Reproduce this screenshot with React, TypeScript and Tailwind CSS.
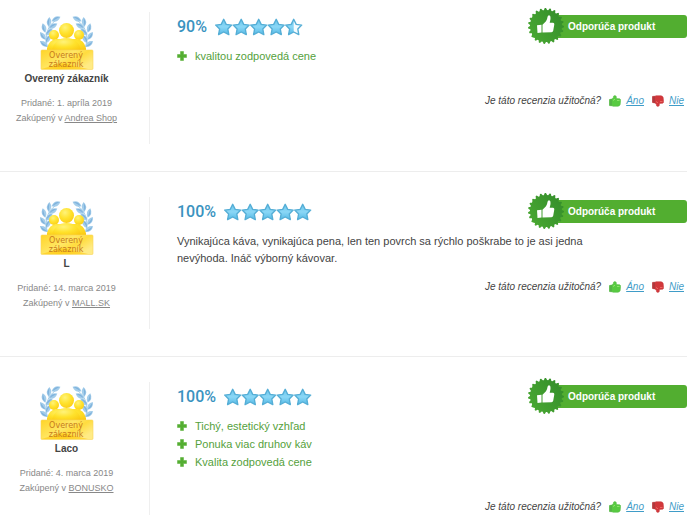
import React from "react";

type Review = {
  author: string;
  date: string;
  shop: string;
  percent: number;
  pros?: string[];
  text?: string;
};

const reviews: Review[] = [
  { author: "Overený zákazník", date: "1. apríla 2019", shop: "Andrea Shop", percent: 90, pros: ["kvalitou zodpovedá cene"] },
  {
    author: "L",
    date: "14. marca 2019",
    shop: "MALL.SK",
    percent: 100,
    text: "Vynikajúca káva, vynikajúca pena, len ten povrch sa rýchlo poškrabe to je asi jedna nevýhoda. Ináč výborný kávovar.",
  },
  {
    author: "Laco",
    date: "4. marca 2019",
    shop: "BONUSKO",
    percent: 100,
    pros: ["Tichý, estetický vzhľad", "Ponuka viac druhov káv", "Kvalita zodpovedá cene"],
  },
];

const leaves = [
  [16, 3, 62], [9, 6, 5], [13, 10, 60], [4, 12, -15],
  [9, 16, 45], [3, 20, -35], [8, 23, 30], [4, 28, -55],
];

function Laurel() {
  return (
    <g fill="#a3cdea">
      <path d="M15 5C8 10 5 17 7 31" fill="none" stroke="#a9d0e8" strokeWidth="1" />
      {leaves.map(([x, y, r], i) => (
        <g key={i} transform={`translate(${x} ${y}) rotate(${r})`}>
          <path d="M0 -5Q4.500 0 0 5Q-4.500 0 0 -5Z" />
          <path d="M0 -4Q-3 0 0 4Z" fill="#7fb2dc" />
        </g>
      ))}
    </g>
  );
}

function VerifiedBadge({ id }: { id: string }) {
  return (
    <svg width="54" height="54" viewBox="0 0 54 54" role="img" aria-label="Overený zákazník" className="block">
      <defs>
        <radialGradient id={`${id}-p`} cx="0.4" cy="0.3" r="0.8">
          <stop offset="0" stopColor="#fff37a" />
          <stop offset="0.5" stopColor="#ffe22c" />
          <stop offset="1" stopColor="#fbc812" />
        </radialGradient>
        <linearGradient id={`${id}-b`} x1="0" y1="0" x2="1" y2="0.6">
          <stop offset="0" stopColor="#ffd427" />
          <stop offset="0.5" stopColor="#ffe765" />
          <stop offset="0.7" stopColor="#ffdc3e" />
          <stop offset="1" stopColor="#ffeb85" />
        </linearGradient>
      </defs>
      <Laurel />
      <g transform="translate(53 0) scale(-1 1)"><Laurel /></g>
      <g fill={`url(#${id}-p)`}>
        <circle cx="14" cy="19" r="5" />
        <circle cx="39" cy="19" r="5" />
        <path d="M7 35V32Q9 24 16 23H37Q44 24 46 32V35Z" />
        <path d="M12 35C13 26 19 22 26.500 22S40 26 41 35Z" />
        <circle cx="26.500" cy="14.500" r="7.500" />
      </g>
      <rect x="1" y="34" width="52" height="19.500" rx="1" fill={`url(#${id}-b)`} stroke="#f9d55a" strokeWidth="0.600" />
      <path d="M1.500 53L22 47L48 53Z" fill="#ffc80c" opacity="0.6" />
      <g fill="#c77a1c" fontFamily="DejaVu Sans, sans-serif" fontSize="8" textAnchor="middle">
        <text x="26" y="42">Overený</text>
        <text x="26" y="51">zákazník</text>
      </g>
    </svg>
  );
}

const starPath = "M8.700 0.800L11.200 5.900L16.700 6.600L12.800 10.500L13.800 16.100L8.700 13.500L3.600 16.100L4.600 10.500L0.700 6.600L6.200 5.900Z";

function Stars({ percent, id }: { percent: number; id: string }) {
  const filled = percent / 20;
  return (
    <svg width="88" height="18" viewBox="0 0 88 18" role="img" aria-label={`${percent}%`} className="block">
      <defs>
        <linearGradient id={`${id}-s`} x1="0" y1="0" x2="0" y2="1">
          <stop offset="0" stopColor="#6cc6ec" />
          <stop offset="0.5" stopColor="#8ad7f6" />
          <stop offset="1" stopColor="#54b9e5" />
        </linearGradient>
        <clipPath id={`${id}-c`}><rect x="0" y="0" width="8.700" height="18" /></clipPath>
      </defs>
      {[0, 1, 2, 3, 4].map((i) => (
        <g key={i} transform={`translate(${i * 17.5} 0.5)`}>
          <path d={starPath} fill="#f4fbfe" />
          <path d={starPath} fill={`url(#${id}-s)`} clipPath={filled - i < 1 ? `url(#${id}-c)` : undefined} />
          <path d={starPath} fill="none" stroke="#55aed6" strokeWidth="1.400" strokeLinejoin="round" />
        </g>
      ))}
    </svg>
  );
}

const sealPoints = Array.from({ length: 92 }, (_, i) => {
  const angle = (i * Math.PI * 2) / 92;
  const radius = i % 4 < 2 ? 18 : 16;
  return `${(18 + Math.cos(angle) * radius).toFixed(2)},${(18 + Math.sin(angle) * radius).toFixed(2)}`;
}).join(" ");

function Seal({ id }: { id: string }) {
  return (
    <svg width="36" height="36" viewBox="0 0 36 36" aria-hidden="true" className="absolute -top-[7px] -left-1">
      <defs>
        <linearGradient id={`${id}-g`} x1="0" y1="1" x2="1" y2="0.3">
          <stop offset="0" stopColor="#4cab33" />
          <stop offset="1" stopColor="#358f2b" />
        </linearGradient>
      </defs>
      <polygon points={sealPoints} fill={`url(#${id}-g)`} strokeLinejoin="round" />
      <path
        fill="#fff"
        d="M9 17.200L13.500 16.700V24.500L9.500 25ZM14.500 16.700L18 13.300Q19.200 11.500 19.500 9Q19.800 7 21.300 7.200Q23 7.800 22.500 11L21.700 14.800H25Q26.500 15 26.300 16.600L25.200 22.800Q24.900 24.200 23.500 24.300L14.500 24.600Z"
      />
    </svg>
  );
}

function Thumb({ down = false }: { down?: boolean }) {
  return (
    <svg width="12" height="12" viewBox="0 0 12 12" aria-hidden="true" className="block shrink-0">
      <g transform={down ? "translate(0 12) scale(1 -1)" : undefined}>
        <path
          d="M0.500 4.500L3 4L4.500 2.200V1.200Q5.800 0 7.200 1.200L7.500 3.500L10.800 3.800Q11.800 4.300 11.600 5.500L11.200 9.500Q10.800 11 9 11.300H4L3 10.800L0.500 10.600Z"
          fill={down ? "#d2373b" : "#58ca42"}
          stroke={down ? "#c43a3f" : "#52b842"}
          strokeWidth="0.500"
        />
        <path d="M0.500 4.500L3 4V10.800L0.500 10.600Z" fill={down ? "#b0393d" : "#55b447"} />
        <path d="M4 5.500L6 4.200M8 5.500H10.500" stroke={down ? "#ec6c64" : "#93e672"} strokeWidth="0.900" />
      </g>
    </svg>
  );
}

function Plus() {
  return (
    <svg width="10" height="10" viewBox="0 0 10 10" aria-hidden="true" className="shrink-0">
      <path d="M3.500 0.500H6.500V3.500H9.500V6.500H6.500V9.500H3.500V6.500H0.500V3.500H3.500Z" fill="#54ae32" stroke="#54ae32" strokeWidth="0.500" strokeLinejoin="round" />
    </svg>
  );
}

function ReviewRow({ review, id }: { review: Review; id: string }) {
  return (
    <article className="flex border-t border-[#ededed] pt-[25px] pb-[27px] first:border-t-0 first:pt-3">
      <aside className="flex min-h-[132px] w-[150px] shrink-0 flex-col items-center border-r border-[#efefef] pt-1 pr-4">
        <VerifiedBadge id={id} />
        <h3 className="text-[10px] leading-[18px] font-bold text-[#444]">{review.author}</h3>
        <div className="mt-2 text-center text-[9px] leading-[15px] text-[#888]">
          <p>Pridané: {review.date}</p>
          <p>
            Zakúpený v <a href="#shop" className="underline">{review.shop}</a>
          </p>
        </div>
      </aside>
      <div className="min-w-0 flex-1 pt-[3px] pl-[27px]">
        <div className="flex h-[23px] items-center justify-between">
          <div className="flex items-center gap-2">
            <span className="font-[Roboto,sans-serif] text-[16px] leading-[23px] font-medium text-[#3a93c0]">{review.percent}%</span>
            <Stars percent={review.percent} id={id} />
          </div>
          <div className="relative h-[23px] w-[155px] rounded-[3px] bg-[#52ae30] pl-9 text-[10px] leading-[23px] font-bold text-white">
            <Seal id={id} />
            Odporúča produkt
          </div>
        </div>
        {review.pros && (
          <ul className="mt-[9px] mb-7 text-[11px] leading-[18px] text-[#55a13c]">
            {review.pros.map((pro) => (
              <li key={pro} className="flex items-center gap-2">
                <Plus />
                {pro}
              </li>
            ))}
          </ul>
        )}
        {review.text && <p className="mt-[10px] mb-3 max-w-[430px] text-[11px] leading-[17px] text-[#444]">{review.text}</p>}
        <div className="flex h-4 items-center justify-end pr-[3px] text-[10px] leading-4 italic">
          <span className="mr-2 text-[#444]">Je táto recenzia užitočná?</span>
          <a href="#yes" className="mr-2 flex items-center gap-[5px] text-[#3f9cc8]">
            <Thumb />
            <span className="underline">Áno</span>
          </a>
          <a href="#no" className="flex items-center gap-[5px] text-[#3f9cc8]">
            <Thumb down />
            <span className="underline">Nie</span>
          </a>
        </div>
      </div>
    </article>
  );
}

export default function App() {
  return (
    <main className="bg-white pr-[13px] font-['Liberation_Sans',Arial,sans-serif]">
      <div className="[&>article:last-child]:pb-2">
        {reviews.map((review, i) => (
          <ReviewRow key={review.author} review={review} id={`review-${i}`} />
        ))}
      </div>
    </main>
  );
}
